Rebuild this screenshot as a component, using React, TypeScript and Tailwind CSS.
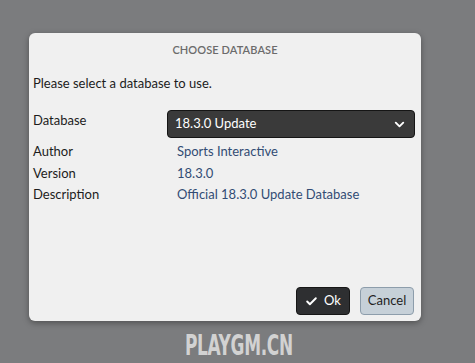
import { Check, ChevronDown } from "lucide-react"

const rows = [
  { label: "Author", value: "Sports Interactive" },
  { label: "Version", value: "18.3.0" },
  { label: "Description", value: "Official 18.3.0 Update Database" },
]

const App = () => {
  return (
    <div className="w-[475px] h-[363px] bg-[#7b7c7e] overflow-hidden font-['Lato','Liberation_Sans',sans-serif]">
      <div className="ml-[29px] mt-[33px] w-[392px] h-[288px] bg-[#f0f0f0] rounded-[6px] shadow-[0_2px_6px_rgba(0,0,0,0.35)] flex flex-col">
        <div className="pt-[10px] text-center text-[11px] leading-[14px] font-semibold text-[#6b6b6b] tracking-[0.1px]">
          CHOOSE DATABASE
        </div>
        <div className="mt-[18px] pl-[4px] text-[13px] leading-[16px] text-[#1c1c1c]">
          Please select a database to use.
        </div>

        <div className="mt-[19px] flex items-center pl-[4px] pr-[6px]">
          <span className="w-[134px] text-[13px] text-[#1c1c1c] -mt-[6px]">Database</span>
          <div className="flex-1 h-[28px] bg-[#3a3a3a] border border-[#151515] rounded-[4px] flex items-center justify-between pl-[7px] pr-[7px] text-white text-[13px]">
            <span>18.3.0 Update</span>
            <ChevronDown size={15} strokeWidth={3} />
          </div>
        </div>

        <div className="mt-[3px] pl-[4px] flex flex-col">
          {rows.map((r) => (
            <div key={r.label} className="flex h-[21.5px] items-center text-[13px]">
              <span className="w-[134px] text-[#1c1c1c]">{r.label}</span>
              <span className="pl-[10px] text-[#324c74]">{r.value}</span>
            </div>
          ))}
        </div>

        <div className="mt-auto mb-[6px] mr-[7px] flex justify-end gap-[10px]">
          <button className="w-[54px] h-[28px] bg-[#2e2f31] border border-[#161616] rounded-[4px] flex items-center justify-center gap-[6px] text-white text-[13px]">
            <Check size={13} strokeWidth={3.5} />
            <span>Ok</span>
          </button>
          <button className="w-[54px] h-[28px] bg-[#c6d0d8] border border-[#8d9dab] rounded-[4px] flex items-center justify-center text-[#1e1e1e] text-[13px]">
            Cancel
          </button>
        </div>
      </div>

      <div className="mt-[9px] flex justify-center pl-[3px]">
        <span className="font-['DejaVu_Sans_Condensed','DejaVu_Sans',sans-serif] font-bold text-[29px] leading-[30px] text-[#d2d2d2] scale-x-[0.65] tracking-[-0.5px]">
          PLAYGM.CN
        </span>
      </div>
    </div>
  )
}

export default App
